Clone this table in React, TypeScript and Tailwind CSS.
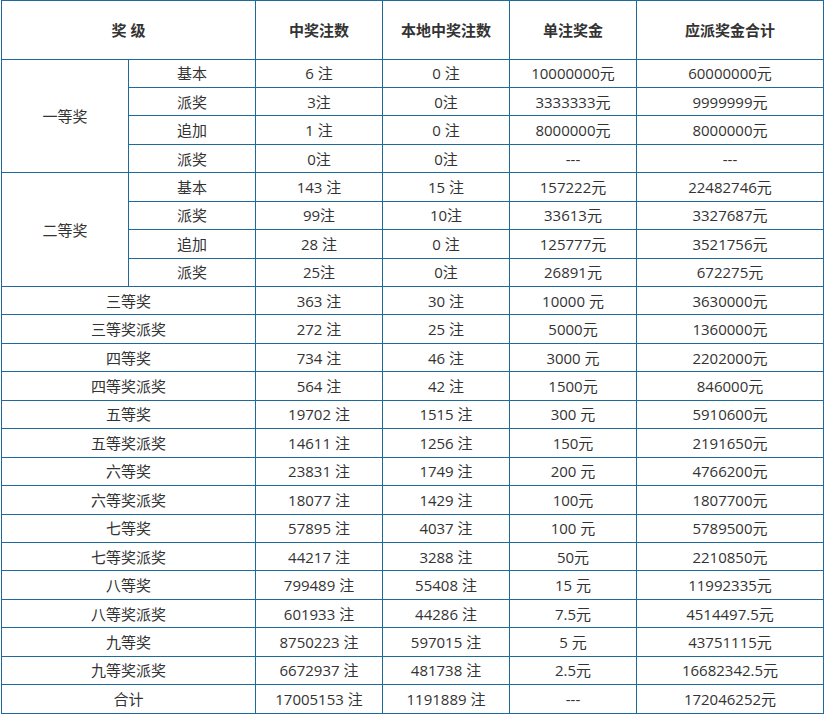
import React from "react";

type Row = [string, string, string, string];

const first: [string, Row][] = [
  ["基本", ["6 注", "0 注", "10000000元", "60000000元"]],
  ["派奖", ["3注", "0注", "3333333元", "9999999元"]],
  ["追加", ["1 注", "0 注", "8000000元", "8000000元"]],
  ["派奖", ["0注", "0注", "---", "---"]],
];
const second: [string, Row][] = [
  ["基本", ["143 注", "15 注", "157222元", "22482746元"]],
  ["派奖", ["99注", "10注", "33613元", "3327687元"]],
  ["追加", ["28 注", "0 注", "125777元", "3521756元"]],
  ["派奖", ["25注", "0注", "26891元", "672275元"]],
];
const rest: [string, Row][] = [
  ["三等奖", ["363 注", "30 注", "10000 元", "3630000元"]],
  ["三等奖派奖", ["272 注", "25 注", "5000元", "1360000元"]],
  ["四等奖", ["734 注", "46 注", "3000 元", "2202000元"]],
  ["四等奖派奖", ["564 注", "42 注", "1500元", "846000元"]],
  ["五等奖", ["19702 注", "1515 注", "300 元", "5910600元"]],
  ["五等奖派奖", ["14611 注", "1256 注", "150元", "2191650元"]],
  ["六等奖", ["23831 注", "1749 注", "200 元", "4766200元"]],
  ["六等奖派奖", ["18077 注", "1429 注", "100元", "1807700元"]],
  ["七等奖", ["57895 注", "4037 注", "100 元", "5789500元"]],
  ["七等奖派奖", ["44217 注", "3288 注", "50元", "2210850元"]],
  ["八等奖", ["799489 注", "55408 注", "15 元", "11992335元"]],
  ["八等奖派奖", ["601933 注", "44286 注", "7.5元", "4514497.5元"]],
  ["九等奖", ["8750223 注", "597015 注", "5 元", "43751115元"]],
  ["九等奖派奖", ["6672937 注", "481738 注", "2.5元", "16682342.5元"]],
  ["合计", ["17005153 注", "1191889 注", "---", "172046252元"]],
];

const td = "border border-[#1d6a9b] text-center align-middle p-0";

function Cells({ r }: { r: Row }) {
  return (
    <>
      {r.map((c, i) => (
        <td key={i} className={td}>
          {c}
        </td>
      ))}
    </>
  );
}

function Group({ name, rows }: { name: string; rows: [string, Row][] }) {
  return (
    <>
      {rows.map(([sub, r], i) => (
        <tr key={i} className="h-[28.45px]">
          {i === 0 && (
            <td rowSpan={rows.length} className={td}>
              {name}
            </td>
          )}
          <td className={td}>{sub}</td>
          <Cells r={r} />
        </tr>
      ))}
    </>
  );
}

export default function App() {
  return (
    <div className="bg-white w-[827px] h-[717px] pl-px">
      <table
        className="table-fixed border-collapse w-[822px] text-[15px] leading-[20px] text-[#333]"
        style={{ fontFamily: '"Open Sans", "Noto Sans CJK SC", sans-serif' }}
      >
        <colgroup>
          <col className="w-[127px]" />
          <col className="w-[127px]" />
          <col className="w-[127px]" />
          <col className="w-[127px]" />
          <col className="w-[127px]" />
          <col className="w-[187px]" />
        </colgroup>
        <tbody>
          <tr className="h-[58.5px] font-bold">
            <td colSpan={2} className={td}>
              奖 级
            </td>
            <td className={td}>中奖注数</td>
            <td className={td}>本地中奖注数</td>
            <td className={td}>单注奖金</td>
            <td className={td}>应派奖金合计</td>
          </tr>
          <Group name="一等奖" rows={first} />
          <Group name="二等奖" rows={second} />
          {rest.map(([name, r], i) => (
            <tr key={i} className="h-[28.45px]">
              <td colSpan={2} className={td}>
                {name}
              </td>
              <Cells r={r} />
            </tr>
          ))}
        </tbody>
      </table>
    </div>
  );
}
